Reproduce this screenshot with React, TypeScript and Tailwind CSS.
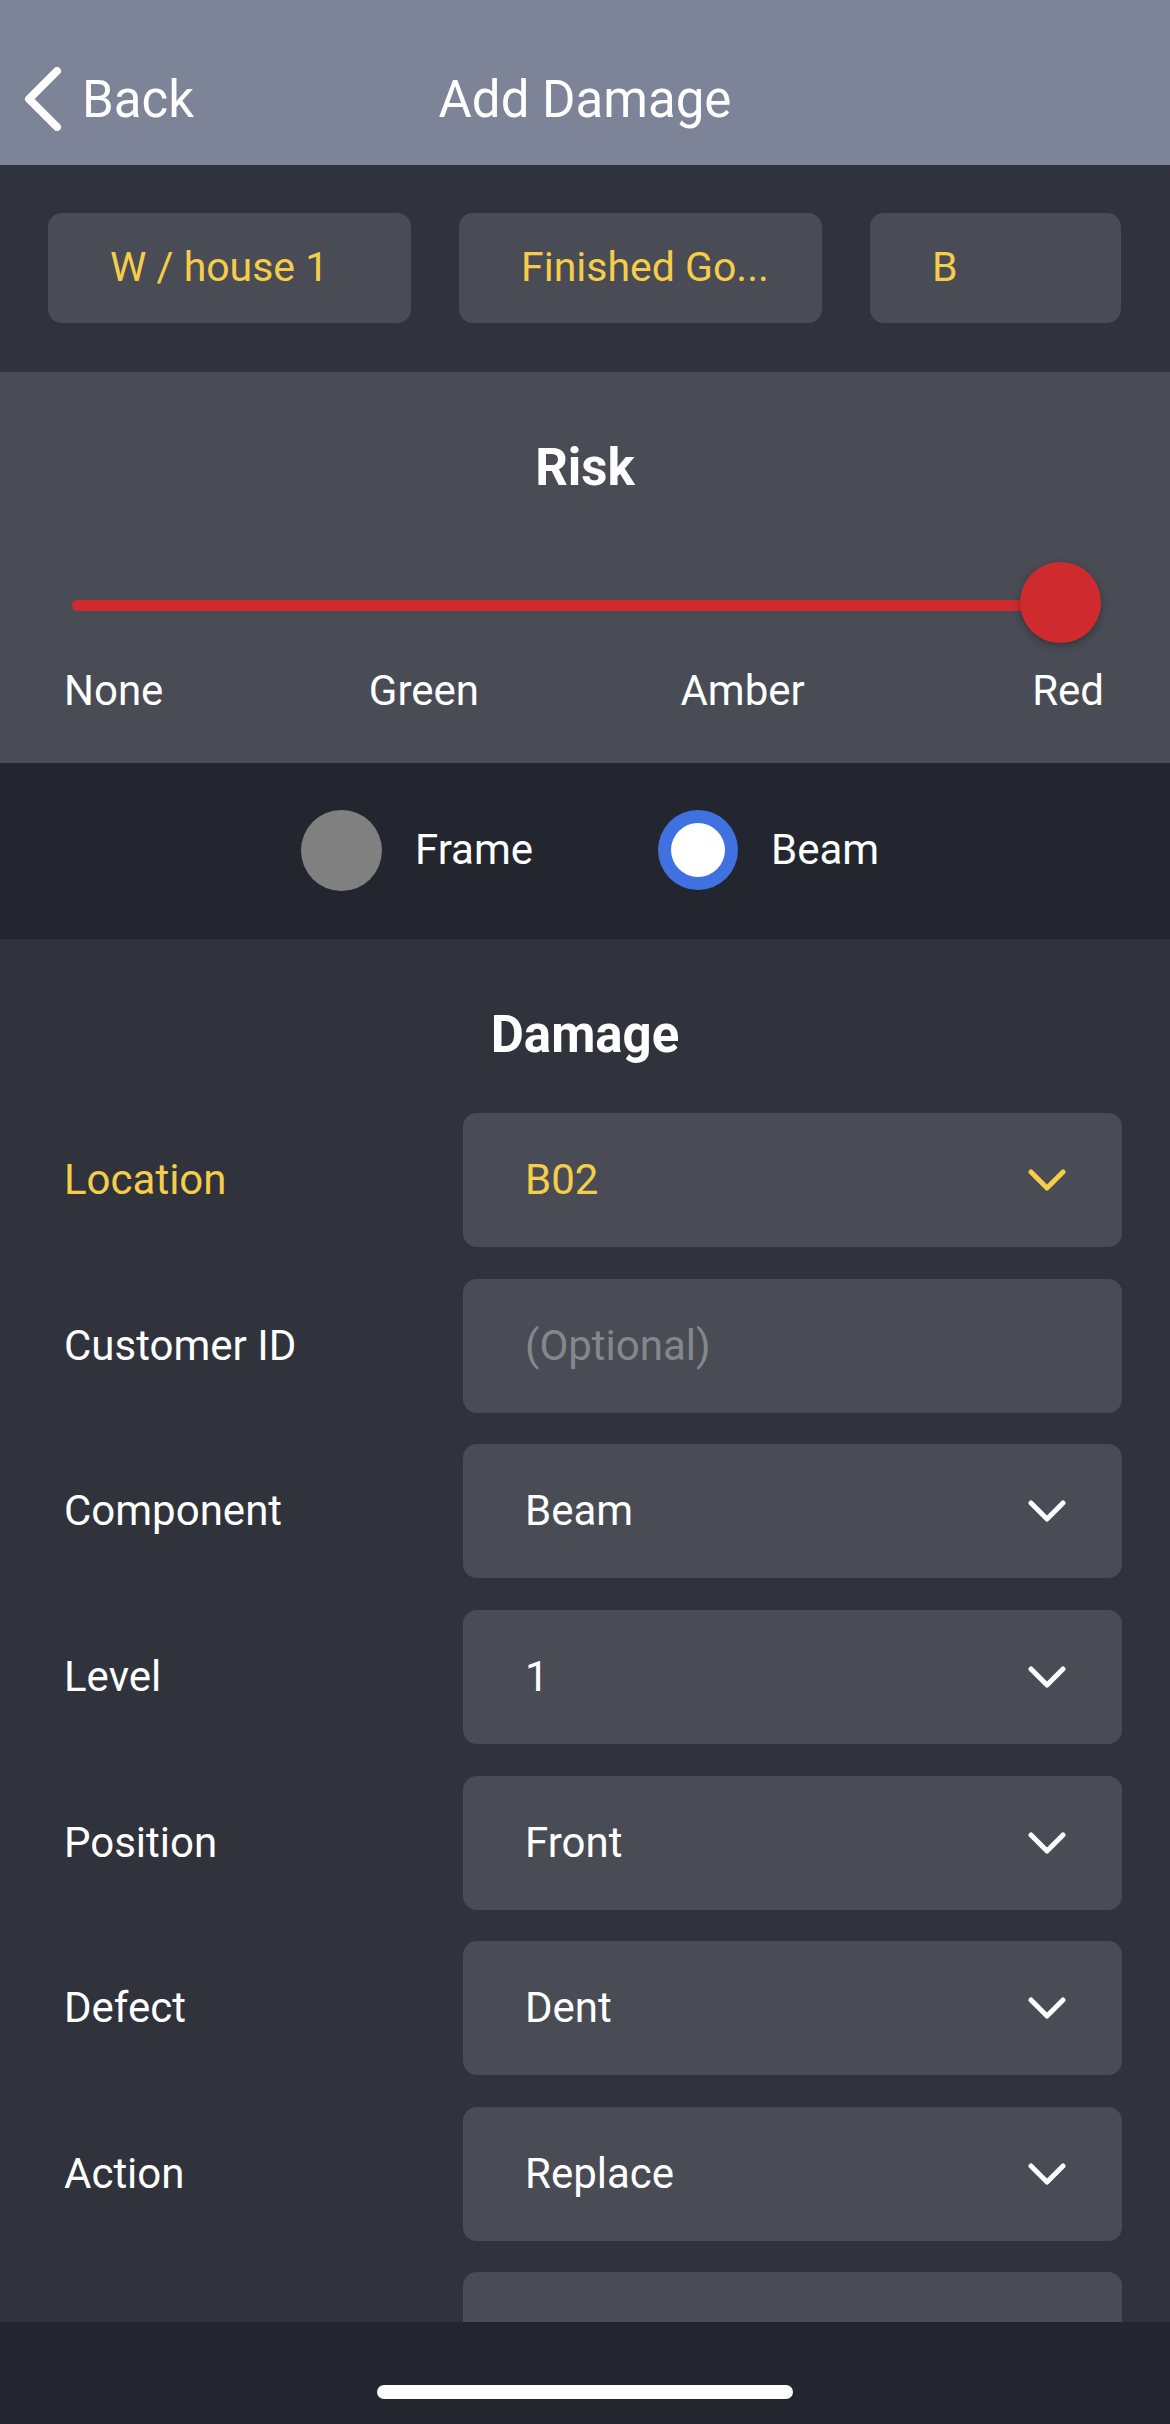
import React from "react";

const FONT = { fontFamily: "Roboto, 'Noto Sans', Arial, sans-serif" };

function ChevronDown({ color }: { color: string }) {
  return (
    <svg width="38" height="24" viewBox="0 0 38 24" fill="none">
      <polyline
        points="3,4 19,20 35,4"
        stroke={color}
        strokeWidth="5"
        strokeLinecap="round"
        strokeLinejoin="round"
      />
    </svg>
  );
}

type Row = {
  label: string;
  value: string;
  highlight?: boolean;
  placeholder?: boolean;
  chevron?: boolean;
};

const rows: Row[] = [
  { label: "Location", value: "B02", highlight: true, chevron: true },
  { label: "Customer ID", value: "(Optional)", placeholder: true },
  { label: "Component", value: "Beam", chevron: true },
  { label: "Level", value: "1", chevron: true },
  { label: "Position", value: "Front", chevron: true },
  { label: "Defect", value: "Dent", chevron: true },
  { label: "Action", value: "Replace", chevron: true },
  { label: "", value: "", chevron: false },
];

export default function App() {
  return (
    <div className="w-[1170px] h-[2424px] flex flex-col overflow-hidden bg-[#30333c]" style={FONT}>
      {/* Header */}
      <div className="h-[165px] shrink-0 bg-[#7e8497] pt-[70px]">
        <div className="grid grid-cols-[1fr_auto_1fr] h-[60px] items-center">
          <div className="flex items-center h-[60px]">
            <svg width="62" height="64" viewBox="0 0 62 64" fill="none" className="-mt-[2px]">
              <polyline
                points="57,4 29,32 57,60"
                stroke="white"
                strokeWidth="8"
                strokeLinecap="round"
                strokeLinejoin="round"
              />
            </svg>
            <span className="text-white text-[51px] leading-[60px] ml-[20px]">Back</span>
          </div>
          <div className="text-white text-[51px] leading-[60px]">Add Damage</div>
          <div />
        </div>
      </div>

      {/* Chips */}
      <div className="h-[207px] shrink-0 bg-[#30333c] pt-[48px] px-[48px] flex gap-[48px]">
        {[
          { t: "W / house 1", w: "w-[363px]" },
          { t: "Finished Go...", w: "w-[363px]" },
          { t: "B", w: "w-[251px]" },
        ].map((c, i) => (
          <div
            key={i}
            className={`${c.w} h-[110px] rounded-[14px] bg-[#494c55] flex items-center pl-[62px] text-[41px] text-[#f5cd4a] whitespace-nowrap overflow-hidden`}
          >
            {c.t}
          </div>
        ))}
      </div>

      {/* Risk */}
      <div className="h-[391px] shrink-0 bg-[#494c55] pt-[66px]">
        <div className="text-center text-white font-bold text-[51px] leading-[60px]">Risk</div>
        <div className="mt-[64px] ml-[72px] mr-[69px] relative h-[81px]">
          <div className="absolute left-0 right-[40px] top-[38px] h-[11px] rounded-full bg-[#cf2b2e]" />
          <div className="absolute right-0 top-0 w-[81px] h-[81px] rounded-full bg-[#cf2b2e] shadow-[0_3px_8px_rgba(0,0,0,0.3)]" />
        </div>
        <div className="mt-[23px] pl-[64px] pr-[66px] flex justify-between text-white text-[42px] leading-[50px]">
          <span>None</span>
          <span className="-ml-[22px]">Green</span>
          <span className="-ml-[26px]">Amber</span>
          <span>Red</span>
        </div>
      </div>

      {/* Radio */}
      <div className="h-[176px] shrink-0 bg-[#23262e] pt-[47px] pl-[301px] flex">
        <div className="w-[357px] flex items-center h-[80px]">
          <div className="w-[81px] h-[81px] rounded-full bg-[#808080]" />
          <span className="ml-[33px] text-white text-[42px] leading-[50px]">Frame</span>
        </div>
        <div className="flex items-center h-[80px]">
          <div className="w-[80px] h-[80px] rounded-full bg-[#3f72e0] flex items-center justify-center">
            <div className="w-[54px] h-[54px] rounded-full bg-white" />
          </div>
          <span className="ml-[33px] text-white text-[42px] leading-[50px]">Beam</span>
        </div>
      </div>

      {/* Damage */}
      <div className="flex-1 overflow-hidden bg-[#30333c] pt-[66px]">
        <div className="text-center text-white font-bold text-[51px] leading-[60px]">Damage</div>
        <div className="mt-[48px] flex flex-col gap-[31.65px]">
          {rows.map((r, i) => (
            <div key={i} className="flex items-center pl-[64px] pr-[48px]">
              <div
                className={`w-[399px] text-[42px] leading-[50px] ${r.highlight ? "text-[#f5cd4a]" : "text-white"}`}
              >
                {r.label}
              </div>
              <div className="w-[659px] h-[134px] rounded-[14px] bg-[#494c55] flex items-center pl-[62px] pr-[56px]">
                <span
                  className={`flex-1 text-[42px] leading-[50px] ${
                    r.placeholder ? "text-[#85878c]" : r.highlight ? "text-[#f5cd4a]" : "text-white"
                  }`}
                >
                  {r.value}
                </span>
                {r.chevron && <ChevronDown color={r.highlight ? "#f5cd4a" : "#ffffff"} />}
              </div>
            </div>
          ))}
        </div>
      </div>

      {/* Bottom bar */}
      <div className="h-[102px] shrink-0 bg-[#23262e] flex justify-center pt-[63px]">
        <div className="w-[416px] h-[14px] rounded-full bg-white" />
      </div>
    </div>
  );
}
